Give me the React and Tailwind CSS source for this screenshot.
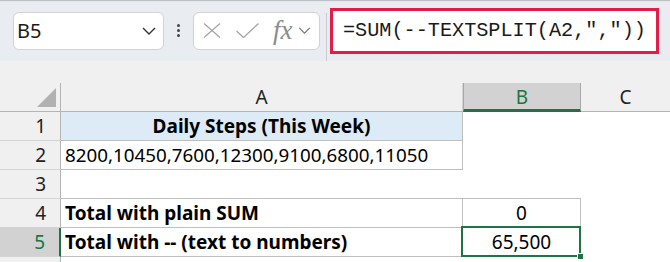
import React from "react";

const cellFont = { fontFamily: "'Noto Sans', 'Open Sans', sans-serif" };

const ChevronDown = ({ className }) => (
  <svg viewBox="0 0 14 8" className={className} fill="none" stroke="currentColor" strokeWidth="1.4">
    <path d="M1 1l6 6 6-6" />
  </svg>
);

const Toolbar = () => (
  <div className="relative flex h-[61px] items-center bg-[#e9edf1] shadow-[inset_0_2px_1px_-1px_#b9bdc3]">
    {/* name box */}
    <div className="ml-[13px] flex h-[38px] w-[151px] items-center justify-between rounded-md border border-[#cfd3d8] bg-white pl-[3px] pr-[7px]">
      <span className="text-[20px] text-[#1a1a1a]" style={{ fontFamily: "'Noto Sans', sans-serif" }}>
        B5
      </span>
      <ChevronDown className="h-[8px] w-[14px] text-[#333]" />
    </div>
    {/* vertical dots */}
    <div className="mx-[13px] flex flex-col gap-[2px]">
      <span className="h-[3px] w-[3px] rounded-full bg-[#444]" />
      <span className="h-[3px] w-[3px] rounded-full bg-[#444]" />
      <span className="h-[3px] w-[3px] rounded-full bg-[#444]" />
    </div>
    {/* cancel / enter / fx */}
    <div className="flex h-[38px] w-[127px] items-center rounded-md border border-[#cfd3d8] bg-white pl-[9px]">
      <svg viewBox="0 0 18 15" className="h-[15px] w-[18px] text-[#a6a6a6]" fill="none" stroke="currentColor" strokeWidth="1.3">
        <path d="M1 0.5l16 14M17 0.5l-16 14" />
      </svg>
      <svg viewBox="0 0 23 15" className="ml-[15px] h-[15px] w-[23px] text-[#a6a6a6]" fill="none" stroke="currentColor" strokeWidth="1.3">
        <path d="M0.5 8l7 6.5L22.5 0.5" />
      </svg>
      <span
        className="ml-[14px] text-[27px] italic leading-none text-[#8c8c8c]"
        style={{ fontFamily: "'Liberation Serif', serif" }}
      >
        fx
      </span>
      <ChevronDown className="ml-[5px] h-[7px] w-[13px] text-[#777]" />
    </div>
    <div className="ml-[6px] h-[48px] w-px self-end bg-[#c9cdd2]" />
    {/* formula bar */}
    <div className="ml-[3px] flex h-[46px] w-[329px] items-center border-[3px] border-[#e11d48] bg-white pl-[10px] pt-[2px]">
      <span className="text-[20.2px] text-[#1a1a1a]" style={{ fontFamily: "'Liberation Mono', monospace" }}>
        =SUM(--TEXTSPLIT(A2,","))
      </span>
    </div>
  </div>
);

const RowHead = ({ n, active }) => (
  <div
    className={
      active
        ? "flex items-center justify-end border-b border-r-2 border-b-[#d4d4d4] border-r-[#217346] bg-[#d2d2d2] pr-[14px] text-[#217346]"
        : "flex items-center justify-end border-b border-r border-b-[#d4d4d4] border-r-[#b4b4b4] pr-[14px] text-[#222]"
    }
  >
    {n}
  </div>
);

export default function App() {
  return (
    <div className="h-[262px] w-[670px] overflow-hidden bg-[#f0f0f0]">
      <Toolbar />
      <div
        className="mt-[22px] grid grid-cols-[61px_402px_118px_1fr] grid-rows-[29px_29px_29px_29px_29px_29px_29px] text-[19px] leading-none"
        style={cellFont}
      >
        {/* header row */}
        <div className="relative border-b border-r border-[#b4b4b4]">
          <svg viewBox="0 0 19 19" className="absolute bottom-[4px] right-[4px] h-[19px] w-[19px]">
            <path d="M19 0V19H0Z" fill="#b1b1b1" />
          </svg>
        </div>
        <div className="flex items-center justify-center border-b border-r border-b-[#b4b4b4] border-r-[#d4d4d4] text-[#222]">A</div>
        <div className="flex items-center justify-center border-x border-b-[3px] border-x-[#a8a8a8] border-b-[#217346] bg-[#d2d2d2] pt-[2px] text-[#217346]">
          B
        </div>
        <div className="flex items-center justify-center border-b border-b-[#b4b4b4] text-[#222]">C</div>

        {/* row 1 */}
        <RowHead n={1} />
        <div className="flex items-center justify-center border-b border-r border-[#bfbfbf] bg-[#ddebf7] font-bold text-black">
          Daily Steps (This Week)
        </div>
        <div className="bg-white" />
        <div className="bg-white" />

        {/* row 2 */}
        <RowHead n={2} />
        <div className="flex items-center border-b border-r border-[#bfbfbf] bg-white pl-[4px] text-[18.8px] text-black">
          8200,10450,7600,12300,9100,6800,11050
        </div>
        <div className="bg-white" />
        <div className="bg-white" />

        {/* row 3 */}
        <RowHead n={3} />
        <div className="border-b border-[#bfbfbf] bg-white" />
        <div className="border-b border-[#bfbfbf] bg-white" />
        <div className="bg-white" />

        {/* row 4 */}
        <RowHead n={4} />
        <div className="flex items-center border-b border-r border-[#bfbfbf] bg-white pl-[4px] font-bold text-black">
          Total with plain SUM
        </div>
        <div className="flex items-center justify-center border-b border-r border-[#bfbfbf] bg-white text-black">0</div>
        <div className="bg-white" />

        {/* row 5 */}
        <RowHead n={5} active />
        <div className="flex items-center border-b border-r border-[#bfbfbf] bg-white pl-[4px] font-bold text-black">
          Total with -- (text to numbers)
        </div>
        <div className="relative flex items-center justify-center border-b border-r border-[#bfbfbf] bg-white text-black">
          65,500
          <div className="absolute -left-[2px] -top-[2px] bottom-[-1px] right-[-1px] border-2 border-[#217346]" />
          <div className="absolute bottom-[-4px] right-[-4px] h-[7px] w-[7px] border border-white bg-[#217346]" />
        </div>
        <div className="bg-white" />

        {/* row 6, mostly off-screen */}
        <RowHead n="" />
        <div className="bg-white" />
        <div className="bg-white" />
        <div className="bg-white" />
      </div>
    </div>
  );
}
